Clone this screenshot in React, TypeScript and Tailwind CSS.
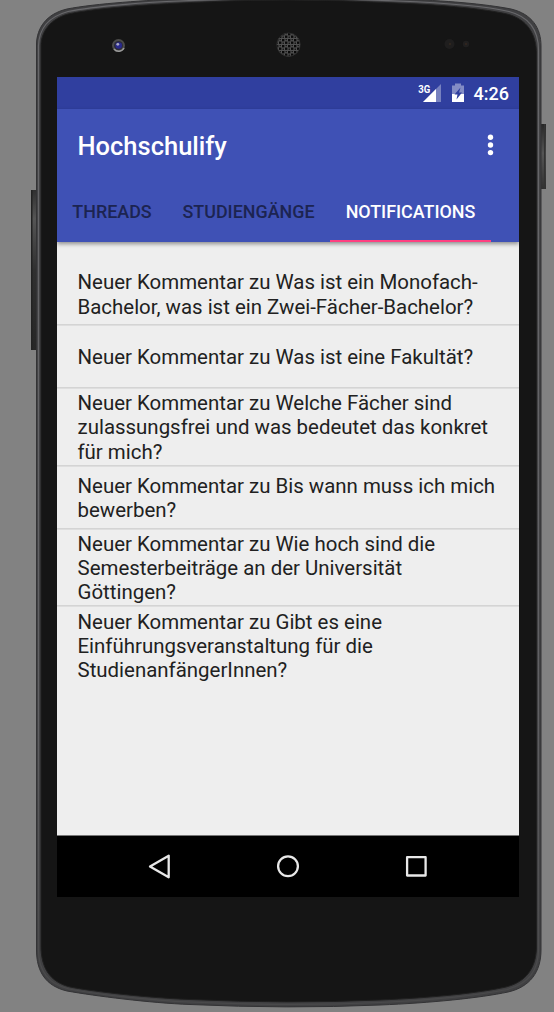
import React from "react";

const BODY =
  "M36.5 44 C37 28 46 14 67 9 C95 3.5 150 0 180 -1 Q288 -6 397 -1 C447 0.5 485 4 511 9 C532 14 541 28 541 46 V950 C541 972 530 987 508 992 C480 998 430 1003 380 1005 Q288 1009 190 1004.5 C150 1003 95 996 67 991 C46 986 36.5 972 36.5 950 Z";
const FACE =
  "M41 46 C41 32 50 19 68 14 C95 8 150 4.500 180 3 Q288 -3 397 3 C447 5 485 9 507 14 C527 19 536.500 34 536.500 54 V946 C536.500 968 526 982 506 987 C480 993 430 998 380 1000 Q288 1004 190 999.500 C150 998 95 992 70 987 C50 982 41 968 41 946 Z";

function Device() {
  return (
    <svg className="col-start-1 row-start-1" width="554" height="1012" viewBox="0 0 554 1012" aria-hidden="true">
      <defs>
        <linearGradient id="leftKey" x1="0" y1="0" x2="0" y2="1">
          <stop offset="0" stopColor="#303030" />
          <stop offset="0.18" stopColor="#555" />
          <stop offset="0.5" stopColor="#303030" />
          <stop offset="1" stopColor="#272727" />
        </linearGradient>
        <linearGradient id="rightKey" x1="0" y1="0" x2="0" y2="1">
          <stop offset="0" stopColor="#272727" />
          <stop offset="0.45" stopColor="#555" />
          <stop offset="1" stopColor="#303030" />
        </linearGradient>
        <linearGradient id="rim" gradientUnits="userSpaceOnUse" x1="0" y1="0" x2="0" y2="1012">
          <stop offset="0" stopColor="#68686b" />
          <stop offset="0.7" stopColor="#606063" />
          <stop offset="0.97" stopColor="#49494a" />
        </linearGradient>
        <pattern id="mesh" x="276" y="33" width="6" height="6" patternUnits="userSpaceOnUse">
          <rect width="6" height="6" fill="#505050" />
          <rect width="2.400" height="2.400" fill="#0a0a0a" />
          <rect x="3" y="2.500" width="2.400" height="2.400" fill="#0a0a0a" />
          <rect x="3.500" width="1.500" height="1.200" fill="#1a1a1a" />
          <rect x="0.500" y="3.500" width="1.500" height="1.500" fill="#1a1a1a" />
        </pattern>
      </defs>
      <rect x="31" y="190" width="6" height="160" fill="url(#leftKey)" />
      <rect x="31" y="190" width="1.500" height="160" fill="#222" />
      <rect x="541" y="124" width="5" height="65" fill="url(#rightKey)" />
      <rect x="544" y="124" width="1.500" height="65" fill="#333" />
      <path d={BODY} fill="#404042" />
      <path d={BODY} fill="none" stroke="#333335" strokeWidth="1" />
      <path
        d="M38.500 950 V46 C39 28 48 17 68 11.500 C95 6 150 2 180 1 Q288 -4 397 1 C447 3 485 6 509 11.500 C530 17 538.500 30 538.500 50 V950 C538.500 970 528 984 507 989.500 C480 995 430 1000.500 380 1002.500 Q288 1006.500 190 1002 C150 1000.500 95 994 69 989 C48 984 38.500 970 38.500 950"
        fill="none"
        stroke="url(#rim)"
        strokeWidth="1.200"
      />
      <path d={FACE} fill="#151515" stroke="#202020" strokeWidth="1" />
      <circle cx="118.500" cy="45.500" r="6.500" fill="#4c4c4a" />
      <path d="M114 49 A6 6 0 0 0 124 48" fill="none" stroke="#999" strokeWidth="1.600" />
      <circle cx="118.500" cy="45.500" r="4.500" fill="#2b2b38" />
      <circle cx="118.700" cy="45.500" r="3.300" fill="#29298c" />
      <circle cx="117.800" cy="44.300" r="1.400" fill="#ababc5" />
      <circle cx="288.500" cy="44.700" r="11.700" fill="url(#mesh)" stroke="#303030" strokeWidth="0.800" />
      <circle cx="449.500" cy="44" r="5" fill="#1f1e1e" />
      <circle cx="450" cy="44" r="1.200" fill="#302720" />
      <circle cx="466" cy="44" r="3.200" fill="#201f1f" />
      <circle cx="466" cy="44" r="1" fill="#34271f" />
    </svg>
  );
}

function StatusBar() {
  return (
    <div className="flex h-8 shrink-0 items-center justify-end bg-[#303f9f] pr-[10px] text-white">
      <svg width="50" height="32" viewBox="0 0 50 32" aria-label="3G, charging">
        <text x="0.300" y="15.500" fill="white" fontFamily="Roboto" fontWeight="700" fontSize="11" textLength="12" lengthAdjust="spacingAndGlyphs">3G</text>
        <path d="M23 7 V25 H5 Z" fill="#7781bf" />
        <path d="M18 12 V25 H5 Z" fill="white" />
        <path d="M34 8.500 H37 V6.500 H43 V8.500 H46 V25 H34 Z" fill="#838cc5" />
        <path d="M34 17 H46 V25 H34 Z" fill="white" />
        <path d="M42.500 10.500 L36.500 17.500 H39.500 L38.500 22.500 L44 15.500 H41 Z" fill="#303f9f" />
      </svg>
      <time className="ml-[6px] pt-px text-[18px] leading-8 font-medium">4:26</time>
    </div>
  );
}

function AppBar() {
  return (
    <header className="relative z-10 h-[133px] shrink-0 bg-[#3f51b5] shadow-[0_2px_4px_rgba(0,0,0,0.4)]">
      <div className="flex h-[72px] items-center justify-between pr-[24px] pl-[20.5px]">
        <h1 className="pt-[2px] text-[25.500px] leading-8 font-medium text-white">Hochschulify</h1>
        <svg width="9" height="24" viewBox="0 0 9 24" fill="white" aria-label="Menu">
          <circle cx="4.500" cy="4.300" r="2.700" />
          <circle cx="4.500" cy="12" r="2.700" />
          <circle cx="4.500" cy="19.600" r="2.700" />
        </svg>
      </div>
      <nav className="flex h-[61px] text-[17.900px] font-medium whitespace-nowrap text-[#1c2451]">
        <span className="flex w-[110px] items-center justify-center pt-[2px]">THREADS</span>
        <span className="flex w-[163px] items-center justify-center pt-[2px]">STUDIENGÄNGE</span>
        <span className="flex w-[161px] items-center justify-center border-b-2 border-[#ff4081] pt-[4px] text-white">NOTIFICATIONS</span>
      </nav>
    </header>
  );
}

const items: { lines: string[]; size: string }[] = [
  { lines: ["Neuer Kommentar zu Was ist ein Monofach-", "Bachelor, was ist ein Zwei-Fächer-Bachelor?"], size: "h-[63px] border-b pt-[3px]" },
  { lines: ["Neuer Kommentar zu Was ist eine Fakultät?"], size: "h-[63px] border-b pt-[2px]" },
  { lines: ["Neuer Kommentar zu Welche Fächer sind", "zulassungsfrei und was bedeutet das konkret", "für mich?"], size: "h-[78px] border-b pt-[2px]" },
  { lines: ["Neuer Kommentar zu Bis wann muss ich mich", "bewerben?"], size: "h-[63px] border-b pt-[2px]" },
  { lines: ["Neuer Kommentar zu Wie hoch sind die", "Semesterbeiträge an der Universität", "Göttingen?"], size: "h-[77px] border-b pt-[2px]" },
  { lines: ["Neuer Kommentar zu Gibt es eine", "Einführungsveranstaltung für die", "StudienanfängerInnen?"], size: "h-[78px] pt-[2px]" },
];

function NotificationList() {
  return (
    <ul className="min-h-0 grow bg-[#eeeeee] pt-[20px]">
      {items.map((item) => (
        <li
          key={item.lines[0]}
          className={`${item.size} flex flex-col justify-center border-[#d4d4d4] pl-[20.5px] text-[20.450px] leading-[24.300px] whitespace-nowrap text-[#212121] shadow-[0_1px_0_#dedede] last:shadow-none`}
        >
          {item.lines.map((line) => (
            <span key={line}>{line}</span>
          ))}
        </li>
      ))}
    </ul>
  );
}

function NavigationBar() {
  return (
    <div className="h-[62px] shrink-0 border-t border-[#777] bg-black">
      <svg width="462" height="61" viewBox="0 0 462 61" fill="none" stroke="#e8e8e8" strokeWidth="2.300" strokeLinejoin="round">
        <path d="M111.700 19.700 V41.300 L93 30.500 Z" />
        <circle cx="231" cy="30.300" r="9.900" />
        <rect x="350.100" y="21.200" width="18.500" height="18.300" />
      </svg>
    </div>
  );
}

export default function App() {
  return (
    <main className="grid h-[1012px] w-[554px] overflow-hidden bg-[#828282] font-[Roboto,sans-serif]">
      <Device />
      <section className="z-10 col-start-1 row-start-1 mt-[77px] ml-[57px] flex h-[820px] w-[462px] flex-col overflow-hidden">
        <StatusBar />
        <AppBar />
        <NotificationList />
        <NavigationBar />
      </section>
    </main>
  );
}
